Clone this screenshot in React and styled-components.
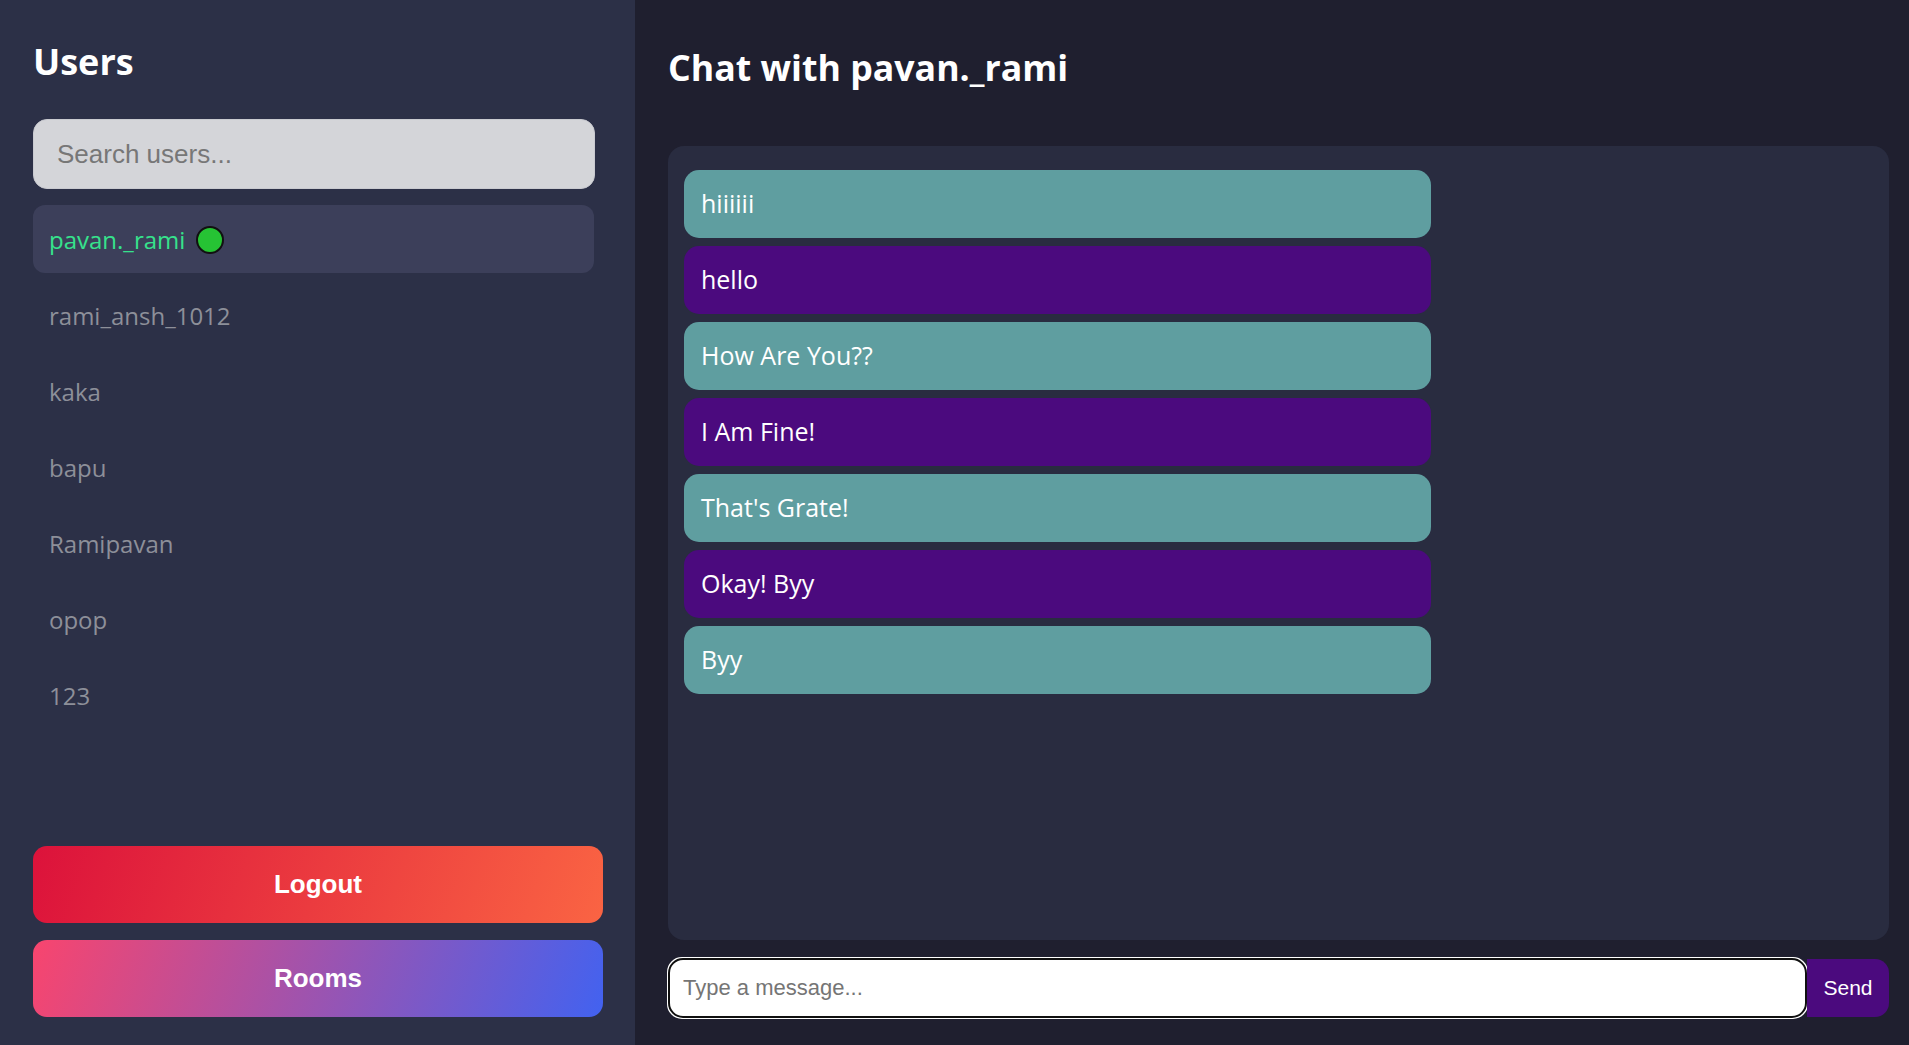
import React from 'react';
import styled, { createGlobalStyle } from 'styled-components';

const GlobalStyle = createGlobalStyle`
  html, body {
    margin: 0;
    padding: 0;
    height: 100%;
  }
  body {
    font-family: "Open Sans", "Noto Sans", sans-serif;
    background: #1f1f2f;
  }
  #root {
    height: 100%;
  }
`;

const Page = styled.div`
  display: flex;
  height: 1045px;
  overflow: hidden;
`;

const Sidebar = styled.aside`
  width: 635px;
  flex-shrink: 0;
  box-sizing: border-box;
  padding: 40px 32px 28px 33px;
  background: #2c3047;
  display: flex;
  flex-direction: column;
`;

const SideTitle = styled.h2`
  margin: 0;
  font-size: 36px;
  line-height: 44px;
  font-weight: 700;
  color: #ffffff;
`;

const SearchInput = styled.input`
  margin-top: 35px;
  width: 562px;
  height: 70px;
  box-sizing: border-box;
  padding: 0 23px;
  border: 1px solid #c9cad0;
  border-radius: 14px;
  background: #d4d5d9;
  font-family: "Liberation Sans", Arial, sans-serif;
  font-size: 26px;
  color: #333;
  outline: none;

  &::placeholder {
    color: #777777;
  }
`;

const UserList = styled.ul`
  list-style: none;
  margin: 16px 0 0;
  padding: 0;
  width: 561px;
  display: flex;
  flex-direction: column;
  gap: 8px;
`;

const UserRow = styled.li`
  height: 68px;
  box-sizing: border-box;
  padding: 0 16px;
  border-radius: 12px;
  display: flex;
  align-items: center;
  gap: 11px;
  font-size: 24px;
  background: ${props => (props.$active ? '#3c3f5a' : 'transparent')};
  color: ${props => (props.$active ? '#36e28c' : '#8d8f99')};
`;

const OnlineDot = styled.span`
  width: 24px;
  height: 24px;
  border-radius: 50%;
  background: #26c334;
  border: 2px solid #111111;
  margin-top: 2px;
`;

const ButtonGroup = styled.div`
  margin-top: auto;
  display: flex;
  flex-direction: column;
  gap: 17px;
`;

const ActionButton = styled.button`
  height: 77px;
  border: none;
  border-radius: 14px;
  color: #ffffff;
  font-family: "Liberation Sans", Arial, sans-serif;
  font-size: 26px;
  font-weight: 700;
  cursor: pointer;
  background: ${props => props.$gradient};
`;

const ChatPane = styled.main`
  flex: 1;
  box-sizing: border-box;
  padding: 45px 20px 27px 33px;
  background: #1f1f2f;
  display: flex;
  flex-direction: column;
`;

const ChatTitle = styled.h2`
  margin: 0;
  font-size: 35.7px;
  line-height: 44px;
  font-weight: 700;
  color: #ffffff;
`;

const MessageBox = styled.section`
  margin-top: 57px;
  flex: 1;
  box-sizing: border-box;
  padding: 24px 16px;
  background: #292c40;
  border-radius: 16px;
  display: flex;
  flex-direction: column;
  gap: 8px;
  overflow-y: auto;
`;

const Bubble = styled.div`
  width: 60%;
  height: 68px;
  flex-shrink: 0;
  padding: 0 17px 2px;
  box-sizing: content-box;
  height: 66px;
  border-radius: 15px;
  display: flex;
  align-items: center;
  font-size: 25px;
  color: #ffffff;
  background: ${props => (props.$mine ? '#4b0a7e' : '#5f9ea0')};
`;

const Composer = styled.form`
  margin-top: 18px;
  display: flex;
  align-items: center;
`;

const MessageInput = styled.input`
  flex: 1;
  height: 60px;
  box-sizing: border-box;
  padding: 0 14px;
  border: 1px solid #cccccc;
  border-radius: 14px;
  background: #ffffff;
  font-family: "Liberation Sans", Arial, sans-serif;
  font-size: 22px;
  color: #222;

  &::placeholder {
    color: #757575;
  }
`;

const SendButton = styled.button`
  width: 82px;
  height: 58px;
  border: none;
  border-radius: 0 14px 14px 0;
  background: #4b0a7e;
  color: #ffffff;
  font-family: "Liberation Sans", Arial, sans-serif;
  font-size: 21px;
  cursor: pointer;
`;

const users = ['pavan._rami', 'rami_ansh_1012', 'kaka', 'bapu', 'Ramipavan', 'opop', '123'];

const messages = [
  { text: 'hiiiiii', mine: false },
  { text: 'hello', mine: true },
  { text: 'How Are You??', mine: false },
  { text: 'I Am Fine!', mine: true },
  { text: "That's Grate!", mine: false },
  { text: 'Okay! Byy', mine: true },
  { text: 'Byy', mine: false },
];

const App = () => (
  <>
    <GlobalStyle />
    <Page>
      <Sidebar>
        <SideTitle>Users</SideTitle>
        <SearchInput placeholder="Search users..." />
        <UserList>
          {users.map((name, i) => (
            <UserRow key={name} $active={i === 0}>
              {name}
              {i === 0 && <OnlineDot />}
            </UserRow>
          ))}
        </UserList>
        <ButtonGroup>
          <ActionButton $gradient="linear-gradient(110deg, #dc123b, #fa6443)">Logout</ActionButton>
          <ActionButton $gradient="linear-gradient(110deg, #f8456e, #4262f0)">Rooms</ActionButton>
        </ButtonGroup>
      </Sidebar>
      <ChatPane>
        <ChatTitle>Chat with pavan._rami</ChatTitle>
        <MessageBox>
          {messages.map((m, i) => (
            <Bubble key={i} $mine={m.mine}>{m.text}</Bubble>
          ))}
        </MessageBox>
        <Composer onSubmit={e => e.preventDefault()}>
          <MessageInput placeholder="Type a message..." autoFocus />
          <SendButton type="submit">Send</SendButton>
        </Composer>
      </ChatPane>
    </Page>
  </>
);

export default App;
